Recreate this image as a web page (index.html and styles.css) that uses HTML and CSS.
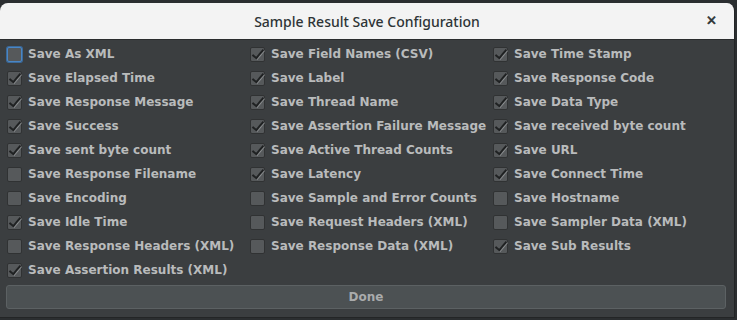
FILE: index.html
```html
<!DOCTYPE html>
<html>

<head>
    <title>Sample Result Save Configuration</title>
    <link rel="stylesheet" href="styles.css">
</head>

<body>
    <div class="dialog">
        <div class="titlebar">
            <span class="title">Sample Result Save Configuration</span>
            <span class="close">&#x2715;</span>
        </div>
        <div class="options">
            <label class="opt"><span class="box focus"></span>Save As XML</label>
            <label class="opt"><span class="box on"></span>Save Field Names (CSV)</label>
            <label class="opt"><span class="box on"></span>Save Time Stamp</label>

            <label class="opt"><span class="box on"></span>Save Elapsed Time</label>
            <label class="opt"><span class="box on"></span>Save Label</label>
            <label class="opt"><span class="box on"></span>Save Response Code</label>

            <label class="opt"><span class="box on"></span>Save Response Message</label>
            <label class="opt"><span class="box on"></span>Save Thread Name</label>
            <label class="opt"><span class="box on"></span>Save Data Type</label>

            <label class="opt"><span class="box on"></span>Save Success</label>
            <label class="opt"><span class="box on"></span>Save Assertion Failure Message</label>
            <label class="opt"><span class="box on"></span>Save received byte count</label>

            <label class="opt"><span class="box on"></span>Save sent byte count</label>
            <label class="opt"><span class="box on"></span>Save Active Thread Counts</label>
            <label class="opt"><span class="box on"></span>Save URL</label>

            <label class="opt"><span class="box"></span>Save Response Filename</label>
            <label class="opt"><span class="box on"></span>Save Latency</label>
            <label class="opt"><span class="box on"></span>Save Connect Time</label>

            <label class="opt"><span class="box"></span>Save Encoding</label>
            <label class="opt"><span class="box"></span>Save Sample and Error Counts</label>
            <label class="opt"><span class="box"></span>Save Hostname</label>

            <label class="opt"><span class="box on"></span>Save Idle Time</label>
            <label class="opt"><span class="box"></span>Save Request Headers (XML)</label>
            <label class="opt"><span class="box"></span>Save Sampler Data (XML)</label>

            <label class="opt"><span class="box"></span>Save Response Headers (XML)</label>
            <label class="opt"><span class="box"></span>Save Response Data (XML)</label>
            <label class="opt"><span class="box on"></span>Save Sub Results</label>

            <label class="opt"><span class="box on"></span>Save Assertion Results (XML)</label>
        </div>
        <div class="footer">
            <button class="done">Done</button>
        </div>
    </div>
</body>

</html>
```

FILE: styles.css
```css
body {
    margin: 0;
    background-color: #2b2e30;
    font-family: "DejaVu Sans", sans-serif;
}

.dialog {
    margin: 3px 2px 0 0;
    height: 315px;
    background-color: #3b3e40;
    border-radius: 8px 8px 0 0;
    border-right: 1px solid #232526;
    border-bottom: 1px solid #232526;
    box-sizing: border-box;
    overflow: hidden;
}

.titlebar {
    height: 36px;
    background-color: #f3f3f3;
    border-bottom: 1px solid #2a2c2d;
    display: flex;
    align-items: center;
    justify-content: center;
    position: relative;
}

.title {
    font-family: "Noto Sans", sans-serif;
    font-size: 14px;
    font-weight: 500;
    color: #2e3436;
    margin-top: 1px;
}

.close {
    position: absolute;
    right: 17px;
    top: 10px;
    font-size: 13px;
    font-weight: bold;
    color: #2e3436;
    -webkit-text-stroke: 0.6px #2e3436;
}

.options {
    display: grid;
    grid-template-columns: 243px 243px 1fr;
    grid-auto-rows: 24px;
    padding: 2px 0 0 7px;
}

.opt {
    display: flex;
    align-items: center;
    font-size: 12px;
    font-weight: bold;
    color: #b9bbbc;
    white-space: nowrap;
}

.box {
    width: 13px;
    height: 13px;
    margin-right: 6px;
    margin-top: 1px;
    background-color: #56595b;
    border: 1px solid #303233;
    border-radius: 2px;
    position: relative;
    flex: none;
}

.box.focus {
    border-color: #4a86c5;
    box-shadow: 0 0 0 1px #3b6a9a;
}

.box.on::after {
    content: "";
    position: absolute;
    left: 4px;
    top: -1px;
    width: 4px;
    height: 10px;
    border-right: 2px solid #1f2122;
    border-bottom: 2px solid #1f2122;
    transform: rotate(40deg);
    filter: drop-shadow(1px 0 0 #8a8d8f);
}

.footer {
    padding: 3px 8px 0 6px;
}

.done {
    width: 100%;
    height: 24px;
    background-color: #4c5153;
    border: 1px solid #5c6163;
    border-radius: 3px;
    color: #a9abac;
    font-family: "DejaVu Sans", sans-serif;
    font-size: 12px;
    font-weight: bold;
}
```
